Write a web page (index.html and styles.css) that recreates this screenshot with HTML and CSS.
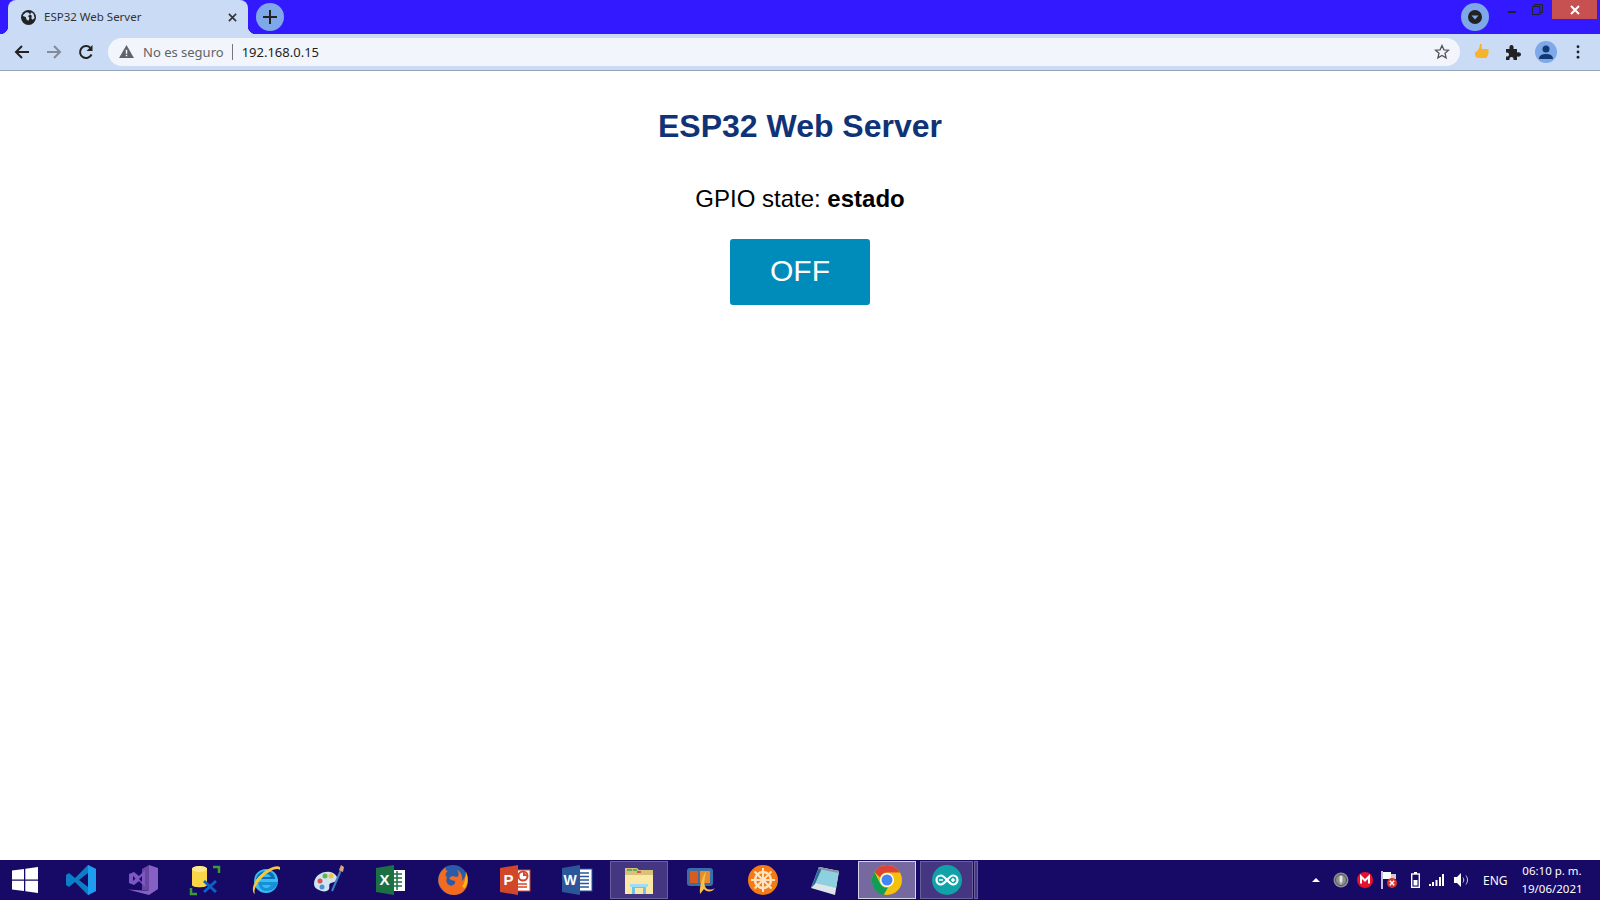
FILE: index.html
```html
<!DOCTYPE html>
<html>
<head>
	<title>ESP32 Web Server</title>
	<link rel="stylesheet" href="styles.css">
</head>
<body>
	<div class="tabstrip">
		<div class="tab">
			<svg class="favicon" viewBox="0 0 16 16"><circle cx="8" cy="8" r="8" fill="#222"/><path d="M2.500 5l3-2.500 3 .5 1 2-2 1.500 1.500 2-1 3-2-1-1-3-3-1zM11.500 2.500l2 2 1 4-2 2-1.500-1.500 .5-3-2-1.500z" fill="#c9dbf5"/></svg>
			<span class="tab-title">ESP32 Web Server</span>
			<svg class="tab-close" viewBox="0 0 10 10"><path d="M1 1l8 8M9 1l-8 8" stroke="#333" stroke-width="1.800"/></svg>
		</div>
		<div class="round-btn new-tab">
			<svg viewBox="0 0 14 14" width="14" height="14"><path d="M7 0v14M0 7h14" stroke="#222" stroke-width="2"/></svg>
		</div>
		<div class="spacer"></div>
		<div class="round-btn tab-search">
			<svg viewBox="0 0 14 14" width="14" height="14"><circle cx="7" cy="7" r="7" fill="#222"/><path d="M3.500 5.500h7L7 9.500z" fill="#7fa8e8"/></svg>
		</div>
		<div class="win-controls">
			<div class="win-btn"><div class="win-min"></div></div>
			<div class="win-btn">
				<svg viewBox="0 0 11 11" width="11" height="11"><path d="M.5 2.500h7.500v8H.5zM2.500 2.500V.5h8v8H8" fill="none" stroke="#222"/></svg>
			</div>
			<div class="win-close">
				<svg viewBox="0 0 10 10" width="10" height="10"><path d="M1 1l8 8M9 1l-8 8" stroke="#fff" stroke-width="2"/></svg>
			</div>
		</div>
	</div>

	<div class="toolbar">
		<svg class="nav-icon" viewBox="0 0 16 16"><path d="M15 8H2M8 2L2 8l6 6" fill="none" stroke="#222" stroke-width="2"/></svg>
		<svg class="nav-icon" viewBox="0 0 16 16"><path d="M1 8h13M8 2l6 6-6 6" fill="none" stroke="#858b96" stroke-width="2"/></svg>
		<svg class="nav-icon" viewBox="0 0 16 16"><path d="M13.500 10.500A6 6 0 1 1 12.300 3.800" fill="none" stroke="#222" stroke-width="2"/><path d="M14.500 1v6h-6z" fill="#222"/></svg>
		<div class="omnibox">
			<svg class="warn-icon" viewBox="0 0 16 14"><path d="M8 0l8 14H0z" fill="#5f6368"/><path d="M7.200 5h1.600v4.500H7.200zM7.200 10.500h1.600V12H7.200z" fill="#f2f6fc"/></svg>
			<span class="not-secure">No es seguro</span>
			<span class="url">192.168.0.15</span>
			<div class="spacer"></div>
			<svg class="star" viewBox="0 0 16 16"><path d="M8 1.500l1.900 4.300 4.600 .4-3.500 3 1.100 4.600L8 11.400l-4.100 2.400L5 9.200l-3.500-3 4.600-.4z" fill="none" stroke="#555" stroke-width="1.300"/></svg>
		</div>
		<div class="ext-icons">
			<svg class="ext" viewBox="0 0 14 16"><path d="M5 0h1.500L7 5h5.500c1.300 0 1.500 1.500.8 2.300.7.800.5 2-.3 2.500.4 1-.1 2-.9 2.300.2 1.200-.5 2-1.500 2H4c-2 0-4-1-4-3V8.500C2 7.500 4.500 5.500 5 0z" fill="#f7b32b"/></svg>
			<svg class="ext" viewBox="0 0 16 16"><path d="M1 5h3.500C4 2.500 5 1 6.500 1S9 2.500 8.500 5H12v3.500c2.500-.5 4 .5 4 2s-1.500 2.500-4 2V16H8.500c.3-2-.5-3-2-3s-2.300 1-2 3H1v-3.500c2 .3 3-.5 3-2s-1-2.300-3-2z" fill="#222"/></svg>
			<div class="avatar">
				<svg viewBox="0 0 16 16" width="16" height="16"><circle cx="8" cy="5" r="3.500" fill="#0f3a73"/><path d="M1 15c0-4 3.500-5 7-5s7 1 7 5z" fill="#0f3a73"/></svg>
			</div>
			<svg class="menu-dots" viewBox="0 0 4 16"><circle cx="2" cy="2" r="1.600" fill="#222"/><circle cx="2" cy="8" r="1.600" fill="#222"/><circle cx="2" cy="14" r="1.600" fill="#222"/></svg>
		</div>
	</div>

	<main class="page">
		<h1>ESP32 Web Server</h1>
		<p>GPIO state: <strong>estado</strong></p>
		<button class="button" type="button">OFF</button>
	</main>

	<div class="taskbar">
		<div class="start">
			<svg viewBox="0 0 26 26" width="26" height="26"><path d="M0 3.600l12-1.700v10.500H0zM13.300 1.700L26 0v12.400H13.300zM0 13.700h12v10.400L0 22.400zM13.300 13.700H26V26l-12.700-1.800z" fill="#fff"/></svg>
		</div>

		<div class="task"><svg viewBox="0 0 32 32"><path d="M23 1l8 4v22l-8 4L10 18l-6 5-3-2v-10l3-2 6 5z" fill="#0a7fc7"/><path d="M23 1l8 4v22l-8 4z" fill="#1f9cf0"/><path d="M23 9v14l-9-7z" fill="#160a66"/></svg></div>
		<div class="task"><svg viewBox="0 0 32 32"><path d="M22 1l9 3v21l-9 6L1 25.500 22 27z" fill="#8661c5"/><path d="M22 1v26l-7-1V5z" fill="#68479e"/><path d="M2 10l5-2 5 4 6-6v17l-6-6-5 4-5-2zM6 12v5l2.500-2.500zM12 15l3 3v-6z" fill="#7e57c2" fill-rule="evenodd"/></svg></div>
		<div class="task"><svg viewBox="0 0 32 32"><path d="M24 3h6v6M2 24v6h6" fill="none" stroke="#3c9a3c" stroke-width="2.500"/><path d="M3 5c0-4 15-4 15 0v16c0 3-15 3-15 0z" fill="#f8d648"/><ellipse cx="10.500" cy="5" rx="7.500" ry="3" fill="#fbe98f"/><path d="M15 28l12-11M27 28L15 17" stroke="#0b62c4" stroke-width="3"/></svg></div>
		<div class="task"><svg viewBox="0 0 32 32"><circle cx="15" cy="17" r="12" fill="#38bdf2"/><path d="M5 15h19c0-5-4-8-9-8s-9 3-10 8zM10 13c1-2 3-3 5-3s4 1 5 3z" fill="#0d6fb8" fill-rule="evenodd"/><path d="M7 18h20c-1 6-6 9-12 9-4 0-7-3-8-9zm4 3c1 2 2 3 4 3s4-1 5-3z" fill="#1790d8" fill-rule="evenodd"/><path d="M29 3C25 0 12 6 5 16 1 22 1 29 4 30 2 26 6 19 12 13 18 7 26 3 29 6z" fill="#f5c73b"/></svg></div>
		<div class="task"><svg viewBox="0 0 32 32"><path d="M1 20C1 12 9 7 17 8c6 1 9 7 7 9l-6 2c-3 1-1 4-2 6-1 3-7 3-10 1-3-1-5-3-5-6z" fill="#cfe3f0"/><circle cx="7" cy="17" r="2.500" fill="#d9534f"/><circle cx="12" cy="12" r="2.500" fill="#6ab04c"/><circle cx="18" cy="12" r="2.500" fill="#f0c040"/><circle cx="9" cy="23" r="2.500" fill="#4a90d9"/><path d="M19 27L28 6" stroke="#3f7fc4" stroke-width="2"/><path d="M26 6l2-5 3 2-1 5z" fill="#d8a877"/></svg></div>
		<div class="task"><svg viewBox="0 0 32 32"><rect x="15" y="6" width="15" height="21" fill="#fff"/><path d="M18 10h9M18 14h9M18 18h9M18 22h9M22 7v19" stroke="#1d7044" stroke-width="1.500"/><path d="M19 1v30L1 28V4z" fill="#1d7044"/><text class="tile-letter" x="4.500" y="21" font-size="15">X</text></svg></div>
		<div class="task"><svg viewBox="0 0 32 32"><circle cx="16" cy="16" r="15" fill="#2a5aa8"/><path d="M9 3C3 7 0 14 2 20c3 8 10 11 15 11 8 0 14-6 14-15 0-3-1-6-2-8 0 4-2 7-4 9 1-5-1-9-5-11 2 3 2 6 0 7l-5-1-3 2 2 2 4 1c1 3-3 6-6 4-3-2-3-5-2-8-2-1-2-4 1-6-2 0-3-2-2-4z" fill="#f26b21"/><path d="M29 8c2 6 2 11-1 16l-3-1c3-5 4-10 4-15z" fill="#fdb813"/></svg></div>
		<div class="task"><svg viewBox="0 0 32 32"><rect x="15" y="6" width="16" height="21" fill="#fff" stroke="#d2472a"/><circle cx="24" cy="12" r="4.500" fill="none" stroke="#d2472a" stroke-width="2"/><path d="M24 7.500V12h4.500" fill="#d2472a"/><path d="M18 20h10M18 23h10" stroke="#d2472a" stroke-width="1.500"/><path d="M19 1v30L1 28V4z" fill="#d2472a"/><text class="tile-letter" x="4.500" y="21" font-size="15">P</text></svg></div>
		<div class="task"><svg viewBox="0 0 32 32"><rect x="15" y="5" width="16" height="22" fill="#fff" stroke="#2b579a"/><path d="M18 9h10M18 12.500h10M18 16h10M18 19.500h10M18 23h10" stroke="#2b579a" stroke-width="1.500"/><path d="M19 1v30L1 28V4z" fill="#2b579a"/><text class="tile-letter" x="2.500" y="21" font-size="14">W</text></svg></div>
		<div class="task task-open"><svg viewBox="0 0 32 32"><path d="M2 4h12l2 2h14v22H2z" fill="#d8c27a"/><path d="M4 5h5v2H4zM10 5h4v2h-4z" fill="#5ab05a"/><path d="M14 7h4v2h-4z" fill="#d9534f"/><path d="M2 11h28v19H2z" fill="#fbe8a4"/><path d="M9 30V20h14v10h-3v-6h-8v6z" fill="#6fc2ea"/><path d="M7 20h18v3H7z" fill="#9fdcf5"/></svg></div>
		<div class="task"><svg viewBox="0 0 32 32"><rect x="2" y="4" width="26" height="18" rx="3" fill="#3b6ea8"/><rect x="5" y="7" width="8" height="12" fill="#d95b1d"/><rect x="15" y="7" width="10" height="12" fill="#e88b2c"/><path d="M15 30c-1-8 3-18 6-23-1 7-3 13 0 17 2 2 6 2 9 0-3 5-9 4-11 1" fill="#f2c14e"/></svg></div>
		<div class="task"><svg viewBox="0 0 32 32"><circle cx="16" cy="16" r="15" fill="#f57c14"/><circle cx="16" cy="16" r="8" fill="none" stroke="#fde3c4" stroke-width="2.500"/><circle cx="16" cy="16" r="3" fill="#fde3c4"/><path d="M16 4v24M4 16h24M7.500 7.500l17 17M24.500 7.500l-17 17" stroke="#fde3c4" stroke-width="2"/></svg></div>
		<div class="task"><svg viewBox="0 0 32 32"><path d="M10 3l20 4-4 24-24-7z" fill="#dfe4e8"/><path d="M10 3l20 4-3 17-21-5z" fill="#8fd0e0"/><path d="M2 24l8-21 3 1-7 16z" fill="#2e6a96"/><path d="M10 3l20 4-.5 2-20-4z" fill="#8f959b"/></svg></div>
		<div class="task task-active"><svg viewBox="0 0 32 32"><circle cx="16" cy="16" r="15" fill="#f4c20d"/><path d="M16 1a15 15 0 0 1 13 7.500H16a7.500 7.500 0 0 0-7 5L3.300 8A15 15 0 0 1 16 1z" fill="#db4437"/><path d="M3.300 8L9.500 20a7.500 7.500 0 0 0 7.500 3.500L12.500 31A15 15 0 0 1 3.300 8z" fill="#0f9d58"/><circle cx="16" cy="16" r="7" fill="#fff"/><circle cx="16" cy="16" r="5.500" fill="#4285f4"/></svg></div>
		<div class="task task-open task-stack"><svg viewBox="0 0 32 32"><circle cx="16" cy="16" r="15" fill="#10a2a8"/><path d="M10 11.500a4.500 4.500 0 1 0 0 9c4 0 8-9 12-9a4.500 4.500 0 1 1 0 9c-4 0-8-9-12-9z" fill="none" stroke="#fff" stroke-width="2.200"/><path d="M8 16h4M20 16h4M22 14v4" stroke="#fff" stroke-width="1.500"/></svg></div>
		<div class="task-sliver"></div>

		<div class="spacer"></div>

		<div class="tray">
			<svg class="tray-caret" viewBox="0 0 8 4"><path d="M4 0l4 4H0z" fill="#fff"/></svg>
			<svg class="tray-mic" viewBox="0 0 16 16"><circle cx="8" cy="8" r="7.500" fill="#8b8f93"/><circle cx="8" cy="8" r="5.500" fill="none" stroke="#555"/><rect x="6.500" y="3.500" width="3" height="7" rx="1.500" fill="#e4e4e4"/><path d="M8 10.500v2" stroke="#e4e4e4"/></svg>
			<svg class="tray-mega" viewBox="0 0 16 16"><circle cx="8" cy="8" r="8" fill="#e8112d"/><path d="M4 11.500v-7l4 4 4-4v7" fill="none" stroke="#fff" stroke-width="2"/></svg>
			<svg class="tray-flag" viewBox="0 0 16 18"><path d="M1 0v18" stroke="#fff" stroke-width="1.500"/><path d="M2 1h8v7H2z" fill="#fff"/><path d="M10 3h5v5h-5z" fill="#ccc"/><circle cx="11" cy="12" r="5" fill="#d9352c"/><path d="M8.800 9.800l4.400 4.400M13.200 9.800l-4.400 4.400" stroke="#fff" stroke-width="1.500"/></svg>
			<svg class="tray-battery" viewBox="0 0 9 16"><rect x=".7" y="2" width="7.600" height="13.300" fill="none" stroke="#fff" stroke-width="1.400"/><rect x="3" y="0" width="3" height="2" fill="#fff"/><rect x="2.500" y="8" width="4" height="5.500" fill="#fff"/></svg>
			<svg class="tray-signal" viewBox="0 0 15 12"><path d="M0 10h2v2H0zM3 8h2v4H3zM6.500 6h2v6h-2zM10 3h2v9h-2zM13 0h2v12h-2z" fill="#fff"/></svg>
			<svg class="tray-volume" viewBox="0 0 15 14"><path d="M0 4h3l4-4v14l-4-4H0z" fill="#fff"/><path d="M9 4.500c1 1.500 1 3.500 0 5M12 2.500c2 3 2 6 0 9" fill="none" stroke="#c9c9d8"/></svg>
			<span class="tray-lang">ENG</span>
			<div class="clock">
				<span>06:10 p. m.</span>
				<span>19/06/2021</span>
			</div>
		</div>
	</div>
</body>
</html>
```

FILE: styles.css
```css
* {
	box-sizing: border-box;
}
html, body {
	height: 100%;
}
body {
	display: flex;
	flex-direction: column;
	height: 900px;
	margin: 0;
	overflow: hidden;
	background-color: #fff;
	font-family: "Noto Sans", sans-serif;
}
.spacer {
	flex: 1;
}

/* tab strip */
.tabstrip {
	display: flex;
	align-items: flex-start;
	flex: none;
	height: 34px;
	padding-left: 8px;
	background-color: #3319ff;
}
.tab {
	position: relative;
	display: flex;
	align-items: center;
	width: 240px;
	height: 34px;
	padding: 0 11px 0 13px;
	background-color: #c9dbf5;
	border-radius: 8px 8px 0 0;
}
.tab::before,
.tab::after {
	content: "";
	position: absolute;
	bottom: 0;
	width: 8px;
	height: 8px;
}
.tab::before {
	left: -8px;
	background: radial-gradient(circle at 0 0, #3319ff 8px, #c9dbf5 8.500px);
}
.tab::after {
	right: -8px;
	background: radial-gradient(circle at 100% 0, #3319ff 8px, #c9dbf5 8.500px);
}
.favicon {
	width: 15px;
	height: 15px;
	margin-right: 8px;
}
.tab-title {
	flex: 1;
	padding-bottom: 2px;
	font-size: 11.500px;
	color: #333;
}
.tab-close {
	width: 9px;
	height: 9px;
}
.round-btn {
	display: flex;
	align-items: center;
	justify-content: center;
	width: 28px;
	height: 28px;
	margin-top: 3px;
	border-radius: 50%;
	background-color: #7fa8e8;
}
.new-tab {
	margin-left: 8px;
}
.tab-search {
	margin-right: 9px;
}
.win-controls {
	display: flex;
	align-items: flex-start;
	margin-right: 3px;
}
.win-btn {
	display: flex;
	align-items: center;
	justify-content: center;
	width: 26px;
	height: 19px;
}
.win-min {
	width: 8px;
	height: 2px;
	margin: 4px 0 0 2px;
	background-color: #222;
}
.win-close {
	display: flex;
	align-items: center;
	justify-content: center;
	width: 45px;
	height: 19px;
	margin-left: 2px;
	background-color: #c75050;
}

/* toolbar */
.toolbar {
	display: flex;
	align-items: center;
	flex: none;
	height: 37px;
	padding: 0 0 1px 14px;
	background-color: #c9dbf5;
	border-bottom: 1px solid #98a4b8;
}
.nav-icon {
	width: 16px;
	height: 16px;
	margin-right: 16px;
}
.omnibox {
	display: flex;
	align-items: center;
	flex: 1;
	height: 28px;
	margin-left: -2px;
	padding: 0 10px 0 11px;
	background-color: #f2f6fc;
	border-radius: 14px;
}
.warn-icon {
	width: 15px;
	height: 13px;
	margin-right: 9px;
}
.not-secure {
	padding-right: 8px;
	border-right: 1px solid #777;
	font-size: 13px;
	line-height: 16px;
	color: #5f6368;
}
.url {
	margin-left: 9px;
	font-size: 13px;
	color: #222;
}
.star {
	width: 16px;
	height: 16px;
}
.ext-icons {
	display: flex;
	align-items: center;
	width: 140px;
	padding-left: 14px;
}
.ext {
	width: 16px;
	height: 16px;
	margin-right: 14.500px;
}
.avatar {
	display: flex;
	align-items: center;
	justify-content: center;
	width: 22px;
	height: 22px;
	border-radius: 50%;
	background-color: #7fa8e8;
}
.menu-dots {
	width: 4px;
	height: 14px;
	margin-left: 19px;
}

/* page */
.page {
	flex: 1;
	padding-top: 17px;
	text-align: center;
	font-family: "Liberation Sans", Arial, sans-serif;
}
h1 {
	margin: 20px 0 40px;
	font-size: 32px;
	line-height: 37px;
	color: #0f3376;
}
p {
	margin: 0 0 25px;
	font-size: 24px;
	line-height: 27px;
	color: #000;
}
.button {
	width: 140px;
	height: 66px;
	margin: 2px;
	padding: 0 0 3px;
	border: none;
	border-radius: 3px;
	background-color: #008cba;
	color: #fff;
	font-family: inherit;
	font-size: 30px;
}

/* taskbar */
.taskbar {
	display: flex;
	align-items: center;
	flex: none;
	height: 40px;
	background-color: #160a66;
}
.start {
	display: flex;
	align-items: center;
	justify-content: center;
	width: 52px;
	padding-right: 2px;
}
.task {
	display: flex;
	align-items: center;
	justify-content: center;
	width: 58px;
	height: 38px;
	margin-right: 4px;
	border: 1px solid transparent;
}
.task svg {
	width: 32px;
	height: 32px;
}
.tile-letter {
	fill: #fff;
	font-family: "Liberation Sans", sans-serif;
	font-weight: bold;
}
.task-open {
	background-color: #443680;
	border-color: #6a5e9c;
}
.task-active {
	background-color: #75699f;
	border-color: #d8d4e8;
}
.task-stack {
	width: 53px;
	margin-right: 1px;
}
.task-sliver {
	width: 4px;
	height: 38px;
	background-color: #443680;
	border: 1px solid #6a5e9c;
}
.tray {
	display: flex;
	align-items: center;
	color: #fff;
}
.tray svg {
	flex: none;
}
.tray-caret {
	width: 8px;
	height: 4px;
	margin-right: 13px;
}
.tray-mic {
	width: 16px;
	height: 16px;
	margin-right: 8px;
}
.tray-mega {
	width: 16px;
	height: 16px;
	margin-right: 8px;
}
.tray-flag {
	width: 16px;
	height: 18px;
	margin-right: 14px;
}
.tray-battery {
	width: 9px;
	height: 16px;
	margin-right: 9px;
}
.tray-signal {
	width: 15px;
	height: 12px;
	margin-right: 10px;
}
.tray-volume {
	width: 15px;
	height: 14px;
	margin-right: 14px;
}
.tray-lang {
	width: 39px;
	font-size: 12px;
}
.clock {
	display: flex;
	flex-direction: column;
	align-items: center;
	width: 60px;
	margin-right: 18px;
	font-size: 11.500px;
	line-height: 18px;
	white-space: nowrap;
}
```
